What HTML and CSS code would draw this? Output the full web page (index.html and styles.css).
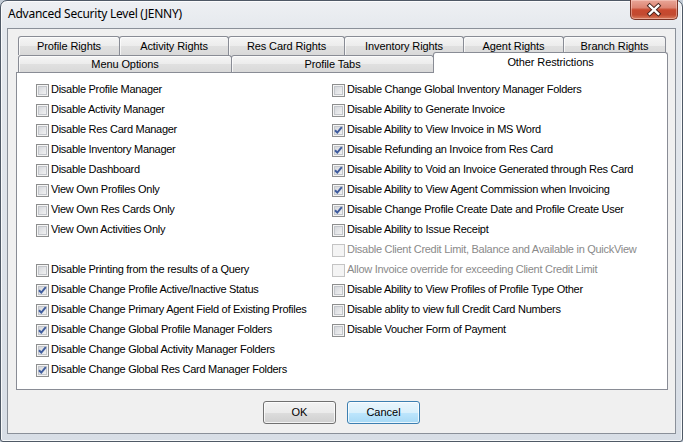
FILE: index.html
```html
<!DOCTYPE html>
<html>
<head>
<meta charset="utf-8">
<link rel="stylesheet" href="styles.css">
</head>
<body>
<div class="window">
  <div class="titlebar">
    <span class="title">Advanced Security Level (JENNY)</span>
    <div class="close">
      <svg width="48" height="19" viewBox="0 0 48 19">
        <path d="M19.5 5.5 L28.5 14 M28.5 5.5 L19.5 14" stroke="#43201a" stroke-width="4.4" stroke-linecap="square" fill="none"/>
        <path d="M19.5 5.5 L28.5 14 M28.5 5.5 L19.5 14" stroke="#ffffff" stroke-width="2.4" stroke-linecap="square" fill="none"/>
      </svg>
    </div>
  </div>
  <div class="client">
    <div class="tabs">
      <div class="tabrow row1">
        <div class="tab w102">Profile Rights</div>
        <div class="tab w110">Activity Rights</div>
        <div class="tab w117">Res Card Rights</div>
        <div class="tab w120">Inventory Rights</div>
        <div class="tab w101">Agent Rights</div>
        <div class="tab w103">Branch Rights</div>
      </div>
      <div class="tabrow row2">
        <div class="tab w214">Menu Options</div>
        <div class="tab w203">Profile Tabs</div>
        <div class="tab w235 sel">Other Restrictions</div>
      </div>
    </div>
    <div class="panel">
      <div class="col left">
        <div class="item"><span class="cb"></span><span class="label">Disable Profile Manager</span></div>
        <div class="item"><span class="cb"></span><span class="label">Disable Activity Manager</span></div>
        <div class="item"><span class="cb"></span><span class="label">Disable Res Card Manager</span></div>
        <div class="item"><span class="cb"></span><span class="label">Disable Inventory Manager</span></div>
        <div class="item"><span class="cb"></span><span class="label">Disable Dashboard</span></div>
        <div class="item"><span class="cb"></span><span class="label">View Own Profiles Only</span></div>
        <div class="item"><span class="cb"></span><span class="label">View Own Res Cards Only</span></div>
        <div class="item"><span class="cb"></span><span class="label">View Own Activities Only</span></div>
        <div class="item"></div>
        <div class="item"><span class="cb"></span><span class="label">Disable Printing from the results of a Query</span></div>
        <div class="item"><span class="cb checked"><svg width="11" height="11" viewBox="0 0 11 11"><path d="M2 5.2 L4.3 7.6 L8.8 2.2" stroke="#3f5c9e" stroke-width="2" fill="none"/></svg></span><span class="label">Disable Change Profile Active/Inactive Status</span></div>
        <div class="item"><span class="cb checked"><svg width="11" height="11" viewBox="0 0 11 11"><path d="M2 5.2 L4.3 7.6 L8.8 2.2" stroke="#3f5c9e" stroke-width="2" fill="none"/></svg></span><span class="label">Disable Change Primary Agent Field of Existing Profiles</span></div>
        <div class="item"><span class="cb checked"><svg width="11" height="11" viewBox="0 0 11 11"><path d="M2 5.2 L4.3 7.6 L8.8 2.2" stroke="#3f5c9e" stroke-width="2" fill="none"/></svg></span><span class="label">Disable Change Global Profile Manager Folders</span></div>
        <div class="item"><span class="cb checked"><svg width="11" height="11" viewBox="0 0 11 11"><path d="M2 5.2 L4.3 7.6 L8.8 2.2" stroke="#3f5c9e" stroke-width="2" fill="none"/></svg></span><span class="label">Disable Change Global Activity Manager Folders</span></div>
        <div class="item"><span class="cb checked"><svg width="11" height="11" viewBox="0 0 11 11"><path d="M2 5.2 L4.3 7.6 L8.8 2.2" stroke="#3f5c9e" stroke-width="2" fill="none"/></svg></span><span class="label">Disable Change Global Res Card Manager Folders</span></div>
      </div>
      <div class="col right">
        <div class="item"><span class="cb"></span><span class="label">Disable Change Global Inventory Manager Folders</span></div>
        <div class="item"><span class="cb"></span><span class="label">Disable Ability to Generate Invoice</span></div>
        <div class="item"><span class="cb checked"><svg width="11" height="11" viewBox="0 0 11 11"><path d="M2 5.2 L4.3 7.6 L8.8 2.2" stroke="#3f5c9e" stroke-width="2" fill="none"/></svg></span><span class="label">Disable Ability to View Invoice in MS Word</span></div>
        <div class="item"><span class="cb checked"><svg width="11" height="11" viewBox="0 0 11 11"><path d="M2 5.2 L4.3 7.6 L8.8 2.2" stroke="#3f5c9e" stroke-width="2" fill="none"/></svg></span><span class="label">Disable Refunding an Invoice from Res Card</span></div>
        <div class="item"><span class="cb checked"><svg width="11" height="11" viewBox="0 0 11 11"><path d="M2 5.2 L4.3 7.6 L8.8 2.2" stroke="#3f5c9e" stroke-width="2" fill="none"/></svg></span><span class="label">Disable Ability to Void an Invoice Generated through Res Card</span></div>
        <div class="item"><span class="cb checked"><svg width="11" height="11" viewBox="0 0 11 11"><path d="M2 5.2 L4.3 7.6 L8.8 2.2" stroke="#3f5c9e" stroke-width="2" fill="none"/></svg></span><span class="label">Disable Ability to View Agent Commission when Invoicing</span></div>
        <div class="item"><span class="cb checked"><svg width="11" height="11" viewBox="0 0 11 11"><path d="M2 5.2 L4.3 7.6 L8.8 2.2" stroke="#3f5c9e" stroke-width="2" fill="none"/></svg></span><span class="label">Disable Change Profile Create Date and Profile Create User</span></div>
        <div class="item"><span class="cb"></span><span class="label">Disable Ability to Issue Receipt</span></div>
        <div class="item disabled"><span class="cb"></span><span class="label">Disable Client Credit Limit, Balance and Available in QuickView</span></div>
        <div class="item disabled"><span class="cb"></span><span class="label">Allow Invoice override for exceeding Client Credit Limit</span></div>
        <div class="item"><span class="cb"></span><span class="label">Disable Ability to View Profiles of Profile Type Other</span></div>
        <div class="item"><span class="cb"></span><span class="label">Disable ablity to view full Credit Card Numbers</span></div>
        <div class="item"><span class="cb"></span><span class="label">Disable Voucher Form of Payment</span></div>
      </div>
    </div>
    <div class="buttons">
      <div class="btn">OK</div>
      <div class="btn default">Cancel</div>
    </div>
  </div>
</div>
</body>
</html>
```
FILE: styles.css
```css
* { box-sizing: border-box; }
html, body { margin: 0; padding: 0; }
body {
  width: 683px;
  height: 442px;
  overflow: hidden;
  background: #c3ccd6;
  font-family: "Liberation Sans", Arial, sans-serif;
  font-size: 11px;
  color: #000;
}
.window {
  width: 683px;
  height: 442px;
  border: 1px solid #4f5966;
  border-radius: 7px 7px 3px 3px;
  background: linear-gradient(180deg, #eef0f3 0px, #e4e8ed 30px, #d8dee6 100%);
  box-shadow: inset 0 0 0 1px rgba(255,255,255,0.8);
  padding: 0 6px 7px 6px;
  display: flex;
  flex-direction: column;
}
.titlebar {
  height: 27px;
  display: flex;
  align-items: flex-start;
  flex: none;
}
.title {
  font-family: "Noto Sans", "Liberation Sans", sans-serif;
  font-size: 12px;
  line-height: 16px;
  margin-top: 5px;
  margin-left: 1px;
  color: #000;
  letter-spacing: -0.25px;
}
.close {
  margin-left: auto;
  margin-right: -2px;
  margin-top: -1px;
  width: 48px;
  height: 20px;
  border: 1px solid #7b3426;
  border-top: none;
  border-radius: 0 0 5px 5px;
  background: linear-gradient(180deg, #e9a698 0%, #dd8573 40%, #c8492f 52%, #c24a30 78%, #da7c5d 100%);
  box-shadow: inset 0 0 0 1px rgba(255,220,210,0.45);
  display: flex;
  align-items: center;
  justify-content: center;
  overflow: hidden;
}
.close svg { display: block; margin-top: -1px; }
.client {
  flex: 1;
  border: 1px solid #8a9099;
  background: #f0f0f0;
  display: flex;
  flex-direction: column;
}
.tabs {
  margin: 7px 0 0 10px;
}
.tabrow {
  display: flex;
  align-items: flex-start;
}
.tab {
  border: 1px solid #898c95;
  border-bottom: none;
  border-radius: 3px 3px 0 0;
  margin-left: -1px;
  text-align: center;
  white-space: nowrap;
  letter-spacing: -0.1px;
  background: linear-gradient(180deg, #f5f5f5 0%, #ececec 50%, #e0e0e0 51%, #d9d9d9 100%);
  box-shadow: inset 1px 1px 0 rgba(255,255,255,0.7);
}
.tab:first-child { margin-left: 0; }
.row1 .tab { height: 19px; line-height: 18px; }
.row2 .tab { height: 17px; line-height: 16px; }
.row2 .tab.sel {
  height: 21px;
  line-height: 19px;
  margin-top: -3px;
  margin-bottom: -1px;
  background: #fff;
  box-shadow: none;
  position: relative;
  z-index: 1;
}
.w101 { width: 101px; }
.w102 { width: 102px; }
.w103 { width: 103px; }
.w110 { width: 110px; }
.w117 { width: 117px; }
.w120 { width: 120px; }
.w214 { width: 214px; }
.w203 { width: 203px; }
.w235 { width: 235px; }
.panel {
  margin-left: 8px;
  width: 652px;
  height: 318px;
  flex: none;
  border: 1px solid #898c95;
  background: #fff;
  padding: 7px 0 0 19px;
  display: flex;
}
.col { display: flex; flex-direction: column; }
.col.left { width: 296px; }
.item {
  height: 20px;
  display: flex;
  align-items: flex-start;
  white-space: nowrap;
  line-height: 19px;
  letter-spacing: -0.28px;
}
.cb {
  width: 13px;
  height: 13px;
  margin-top: 4px;
  flex: none;
  border: 1px solid #8e8f8f;
  background: linear-gradient(135deg, #cdd0d5 0%, #e6e7e9 55%, #f9f9f9 100%);
  box-shadow: inset 0 0 0 1px #f4f4f4, inset 0 0 0 2px #c3c6cb;
  display: flex;
  align-items: center;
  justify-content: center;
}
.cb svg { display: block; }
.label { margin-left: 2px; }
.item.disabled { color: #8a8a8a; }
.item.disabled .cb {
  border-color: #c4c4c4;
  background: #f4f4f4;
  box-shadow: none;
}
.buttons {
  display: flex;
  justify-content: center;
  gap: 11px;
  margin-top: 11px;
}
.btn {
  width: 73px;
  height: 23px;
  border: 1px solid #707070;
  border-radius: 3px;
  background: linear-gradient(180deg, #f2f2f2 0%, #ebebeb 50%, #dddddd 51%, #cfcfcf 100%);
  box-shadow: inset 0 0 0 1px rgba(255,255,255,0.75);
  text-align: center;
  line-height: 21px;
}
.btn.default {
  border-color: #3c7fb1;
  background: linear-gradient(180deg, #eaf6fd 0%, #d9f0fc 50%, #bee6fd 51%, #a7d9f5 100%);
}
```
